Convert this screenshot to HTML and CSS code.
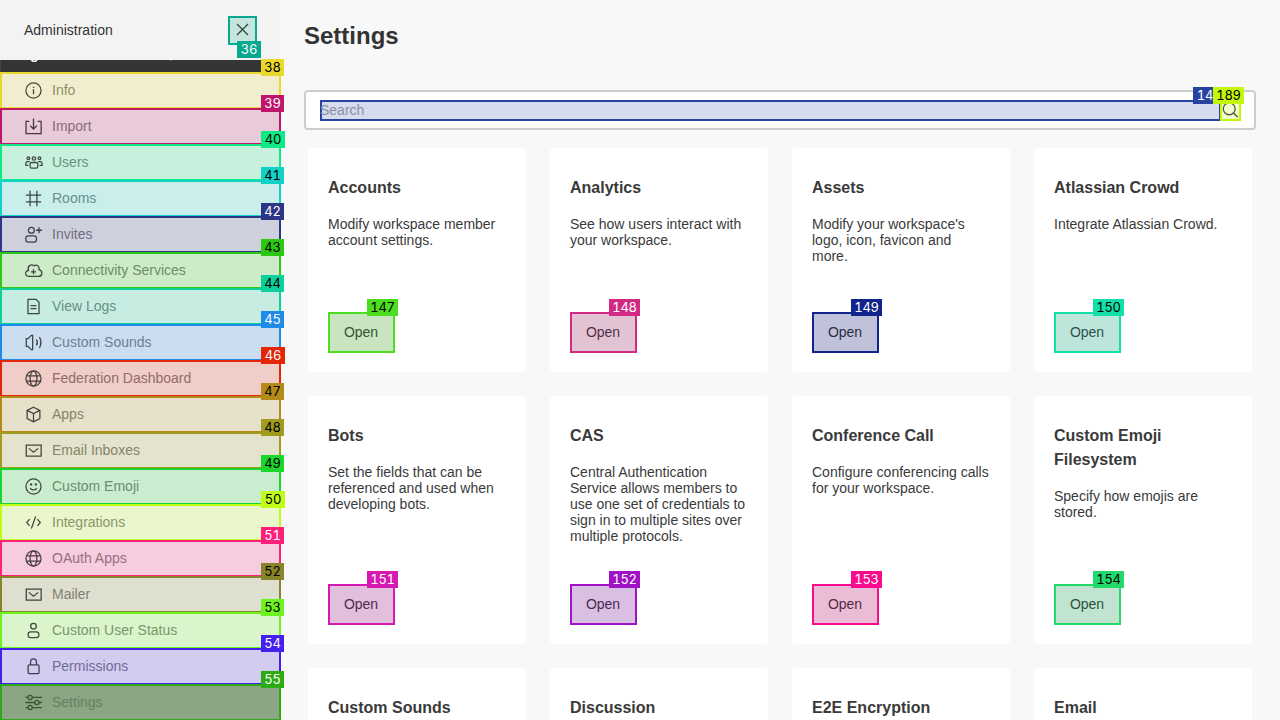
FILE: index.html
```html
<!DOCTYPE html>
<html lang="en">
<head>
<meta charset="utf-8">
<title>Settings</title>
<link rel="stylesheet" href="styles.css">
</head>
<body>
<div class="app">
  <aside class="sidebar">
    <header class="sidebar-head"><span>Administration</span>
      <button class="close mark"><svg class="icon" viewBox="0 0 20 20"><path d="M3.500 3.500l13 13M16.500 3.500l-13 13"/></svg><b class="tag">36</b></button>
    </header>
    <div class="strip"><span class="strip-text"><b>g</b><span>,</span></span></div>
    <nav class="menu" id="menu"></nav>
  </aside>
  <main class="content">
    <h1>Settings</h1>
    <div class="search">
      <div class="search-field mark">Search<b class="tag">14</b></div>
      <div class="search-icon mark"><svg class="icon" viewBox="0 0 20 20"><circle cx="8.500" cy="8" r="7"/><path d="M13.500 13l5 5"/></svg><b class="tag">189</b></div>
    </div>
    <div class="cards" id="cards"></div>
  </main>
</div>
<script src="app.js"></script>
</body>
</html>
```
FILE: styles.css
```css
* { box-sizing: border-box; }
body { margin: 0; background: #f8f8f8; color: #333; font: 14px/16px "Liberation Sans", Arial, sans-serif; }
.app { display: flex; width: 1280px; height: 720px; overflow: hidden; }
.sidebar { width: 280px; flex: none; background: #f3f3f3; }
.sidebar-head { height: 60px; padding: 0 23px 0 24px; display: flex; align-items: center; justify-content: space-between; }
.strip { height: 12px; background: #353535; border-left: 1px solid #444; overflow: hidden; padding-left: 29px; }
.strip-text { display: flex; gap: 130px; margin-top: -14px; color: #fff; font-size: 14px; line-height: 16px; }
.strip-text span { color: #aaa; }
.mark { position: relative; border: 2px solid var(--c); background: var(--bg); }
.tag { position: absolute; z-index: 2; width: 23px; height: 17px; text-align: center; font: 13px/17px Inter, sans-serif; font-variant-numeric: tabular-nums; letter-spacing: -0.3px; color: var(--t, #000); background: var(--c); }
.icon { width: 17px; height: 17px; display: block; flex: none; fill: none; stroke: currentColor; stroke-width: 1.5; overflow: visible; }
.close { width: 29px; height: 29px; padding: 0 1px 1px 0; display: grid; place-items: center; color: #28453f; --c: #06a88f; --bg: #c5e6df; --t: #fff; }
.close .tag { right: -6px; top: 23px; width: 24px; }
.row { width: 281px; height: 37px; margin-bottom: -1px; padding: 0 0 1px 23px; display: flex; align-items: center; gap: 10px; }
.row .icon { color: color-mix(in srgb, var(--bg) 26%, #0c0c0c); }
.row .label { color: color-mix(in srgb, var(--c) 12%, color-mix(in srgb, var(--bg) 45%, #303030)); }
.row .tag { left: 259px; top: -15px; }
.row .tag.wide { width: 24px; }
.row.active .label { color: #658060; }
.row.active .icon { color: #375634; }
.content { flex: 1; padding: 20px 24px 0; }
h1 { margin: 0 0 38px; font-size: 24px; line-height: 32px; }
.search { width: 952px; height: 40px; padding: 0 13px 0 14px; display: flex; align-items: center; background: #fff; border: 2px solid #ccc; border-radius: 4px; }
.search-field { flex: none; width: 901px; height: 21px; line-height: 17px; text-indent: -2px; color: #8a90a8; --c: #2743a1; --bg: #d6dbed; --t: #fff; }
.search-field .tag { left: 871px; top: -15px; text-indent: 0; padding-left: 1px; }
.search-icon { width: 21px; height: 21px; flex: none; margin-left: -1px; --c: #c3f70c; --bg: #f3fdcf; color: #4b5030; }
.search-icon .tag { left: -9px; top: -15px; width: 31px; }
.cards { margin: 18px 4px 0; display: grid; grid-template-columns: repeat(4, 218px); grid-template-rows: 224px 248px 224px; gap: 24px; }
.card { padding: 28px 20px 20px; display: flex; flex-direction: column; align-items: flex-start; background: #fff; border-radius: 4px; color: #3a3a3a; }
.card h2 { margin: 0 0 16px; font-size: 16px; line-height: 24px; font-size: 16px; }
.card p { margin: 0; white-space: nowrap; }
.open { width: 67px; height: 41px; margin: auto 0 -1px; padding: 0 1px 2px 0; font: inherit; color: color-mix(in srgb, var(--c) 20%, #2f3037); }
.open .tag { right: -5px; top: -15px; width: 31px; }
```
FILE: app.js
```js
const icons = {
  info: '<circle cx="10" cy="10" r="8.900"/><path d="M10 8.500v6M10 5.500v1.500"/>',
  import: '<path d="M5 4H1.200v14.500h17.800V4H15M10 .5v12.500M6 9l4 4 4-4"/>',
  users: '<circle cx="4" cy="5" r="1.600"/><circle cx="10.500" cy="5.300" r="2"/><circle cx="17" cy="5" r="1.600"/><rect x="6" y="10" width="9" height="6.500" rx="1.800"/><path d="M5.500 9H3q-2 0-2 2v2.500h3M15.500 9H18q2 0 2 2v2.500h-3"/>',
  hash: '<path d="M6 1v18M14 1v18M1 6h18M1 14h18"/>',
  invite: '<circle cx="7.500" cy="5" r="3.500"/><path d="M16.500 1.500v7M13 5h7"/><rect x="1" y="11.500" width="12.500" height="7.500" rx="2.800"/>',
  cloud: '<path d="M5 17C-.5 17-.5 10 4 10 2.500 4.500 7 2 10.500 4.500c3.500-2 7 .5 6 4.500 4.500 1 4.500 8-.5 8zM10 8.500v6M7 11.500h6"/>',
  log: '<path d="M3.500 1.500h9.500l3.500 3.500v13.500h-13zM6.500 9h7M6.500 12.500h7"/>',
  sound: '<path d="M1.500 5.500h2l4-4h1.500v17H7.500l-4-4h-2zM13.500 6.500q2 3.500 0 7M17 3.500q3.500 6.500 0 13"/>',
  globe: '<circle cx="10" cy="10" r="8.900"/><ellipse cx="10" cy="10" rx="4" ry="8.900"/><path d="M2 7h16M2 13h16"/>',
  cube: '<path d="M10 1.500l7.500 3.700v9.600L10 18.500l-7.500-3.700V5.200zM2.500 5.200L10 9l7.500-3.800M10 9v9.500"/>',
  mail: '<path d="M1.500 3.800h17.500v12.700H1.500zM4.500 7.500L10 12l5.500-4.500"/>',
  emoji: '<circle cx="10" cy="10" r="8.900"/><path d="M6 12q4 4 8 0"/><circle cx="7.200" cy="7.500" r=".7"/><circle cx="12.800" cy="7.500" r=".7"/>',
  code: '<path d="M5.500 6L2 10l3.500 4M14.500 6l3.500 4-3.500 4M12.500 3L7.500 17"/>',
  user: '<circle cx="10" cy="5" r="3.300"/><rect x="3.700" y="11.500" width="12.600" height="6.800" rx="2.800"/>',
  lock: '<rect x="3.700" y="8" width="12.800" height="10.500" rx="1.300"/><path d="M6.500 8V5Q6.500 1 10 1t3.500 4v3"/>',
  sliders: '<circle cx="6" cy="4" r="2.500"/><circle cx="14" cy="10" r="2.500"/><circle cx="6" cy="16" r="2.500"/><path d="M.5 4h3M8.500 4H20M.5 10h11M16.500 10H20M.5 16h3M8.500 16H20"/>'
};
const rows = [
  ['Info', 'info', '#ead92c', '#f2edcf'], ['Import', 'import', '#bf166b', '#e8cad8', '#fff'],
  ['Users', 'users', '#0eea85', '#c8f1dd'], ['Rooms', 'hash', '#11d2c6', '#c9eeeb'],
  ['Invites', 'invite', '#2d3586', '#cfd0de', '#fff'], ['Connectivity Services', 'cloud', '#2cc814', '#cdebc8'],
  ['View Logs', 'log', '#0bd09b', '#c7ede2'], ['Custom Sounds', 'sound', '#1e8be8', '#cbdef0', '#fff'],
  ['Federation Dashboard', 'globe', '#e42508', '#f0cdc7', '#fff'], ['Apps', 'cube', '#b38b18', '#e7e1cb'],
  ['Email Inboxes', 'mail', '#a19b20', '#e4e3cd'], ['Custom Emoji', 'emoji', '#1bd72b', '#caedcf'],
  ['Integrations', 'code', '#bffd19', '#eaf6cb'], ['OAuth Apps', 'globe', '#ff207c', '#f6ccde', '#fff'],
  ['Mailer', 'mail', '#87842b', '#dfdfd0'], ['Custom User Status', 'user', '#6df31f', '#daf4cc'],
  ['Permissions', 'lock', '#451fec', '#d2ccf1', '#fff'], ['Settings', 'sliders', '#2dab13', '#8ba585', '#fff']
];
const wideTags = [40, 46, 50];
document.getElementById('menu').innerHTML = rows.map(([label, icon, c, bg, t = '#000'], i) =>
  `<div class="row mark${i === 17 ? ' active' : ''}" style="--c:${c};--bg:${bg};--t:${t}"><svg class="icon" viewBox="0 0 20 20">${icons[icon]}</svg><span class="label">${label}</span><b class="tag${wideTags.includes(38 + i) ? ' wide' : ''}">${38 + i}</b></div>`).join('');
const cards = [
  ['Accounts', 'Modify workspace member<br>account settings.', '#4ade1f', '#c9e4c1'],
  ['Analytics', 'See how users interact with<br>your workspace.', '#d22a84', '#e2c3d3', '#fff'],
  ['Assets', "Modify your workspace's<br>logo, icon, favicon and<br>more.", '#10248c', '#bfc2d9', '#fff'],
  ['Atlassian Crowd', 'Integrate Atlassian Crowd.', '#13e0a8', '#bee5da'],
  ['Bots', 'Set the fields that can be<br>referenced and used when<br>developing bots.', '#d519b1', '#e2bfdc', '#fff'],
  ['CAS', 'Central Authentication<br>Service allows members to<br>use one set of credentials to<br>sign in to multiple sites over<br>multiple protocols.', '#a012c5', '#d9bfe1', '#fff'],
  ['Conference Call', 'Configure conferencing calls<br>for your workspace.', '#f90b8d', '#eabcd6', '#fff'],
  ['Custom Emoji<br>Filesystem', 'Specify how emojis are<br>stored.', '#22d96c', '#c0e4cf'],
  ['Custom Sounds'], ['Discussion'], ['E2E Encryption'], ['Email']
];
document.getElementById('cards').innerHTML = cards.map(([title, text, c, bg, t = '#000'], i) =>
  `<section class="card"><h2>${title}</h2>${text ? `<p>${text}</p><button class="open mark" style="--c:${c};--bg:${bg};--t:${t}">Open<b class="tag">${147 + i}</b></button>` : ''}</section>`).join('');
```
